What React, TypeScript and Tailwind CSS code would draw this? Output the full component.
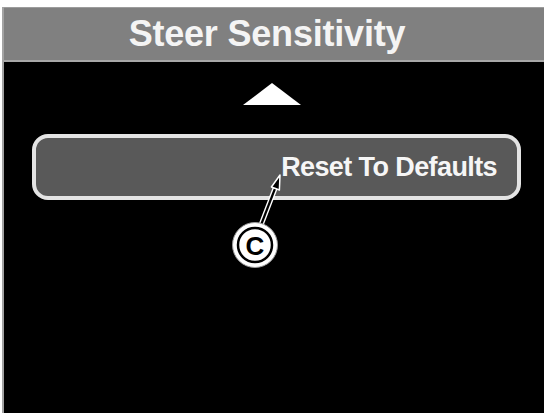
const Callout = () => {
  return (
    <svg className="absolute left-0 top-0 pointer-events-none" width="544" height="413" viewBox="0 0 544 413">
      {/* leader line */}
      <line x1="261" y1="225" x2="276" y2="186" stroke="#ffffff" strokeWidth="5" strokeLinecap="round" />
      <line x1="261" y1="225" x2="276" y2="186" stroke="#000000" strokeWidth="2.2" />
      <polygon points="280,175 271.4,187 279.4,190" fill="#000000" stroke="#ffffff" strokeWidth="1.5" strokeLinejoin="round" />
      {/* label circle */}
      <circle cx="255" cy="245" r="22.5" fill="#ffffff" stroke="#9a9a9a" strokeWidth="1" />
      <circle cx="255" cy="245" r="17" fill="#ffffff" stroke="#000000" strokeWidth="2.5" />
      <text
        x="255"
        y="254.5"
        textAnchor="middle"
        fontFamily="'Liberation Sans', Arial, sans-serif"
        fontWeight="700"
        fontSize="26"
        fill="#000000"
      >
        C
      </text>
    </svg>
  );
};

const App = () => {
  return (
    <div className="relative w-[544px] h-[413px] bg-white pt-[7px] pl-[2px] overflow-hidden font-['Liberation_Sans',Arial,sans-serif]">
      <div className="flex flex-col h-full bg-black border-l-2 border-[#a3a3a3]">
        {/* Title bar */}
        <div className="flex items-center justify-center h-[55px] bg-[#808080] border-t border-[#9c9c9c] border-b-2 border-b-[#a8a8a8]">
          <h1 className="text-[36px] font-bold text-[#f4f4f4] leading-none tracking-[-0.2px] -ml-[14px]">
            Steer Sensitivity
          </h1>
        </div>

        {/* Scroll up indicator */}
        <div className="flex justify-center mt-[21px] -ml-[4px]">
          <div className="w-0 h-0 border-l-[29px] border-r-[29px] border-b-[22px] border-l-transparent border-r-transparent border-b-white" />
        </div>

        {/* Menu item */}
        <div className="mt-[29px] ml-[28px] mr-[23px] h-[66px] rounded-[16px] border-[4px] border-[#e4e4e4] bg-[#595959] flex items-center justify-end pr-[20px]">
          <span className="text-[27px] font-bold text-[#f6f6f6] leading-none tracking-[-0.6px]">
            Reset To Defaults
          </span>
        </div>
      </div>

      <Callout />
    </div>
  );
};

export default App;
